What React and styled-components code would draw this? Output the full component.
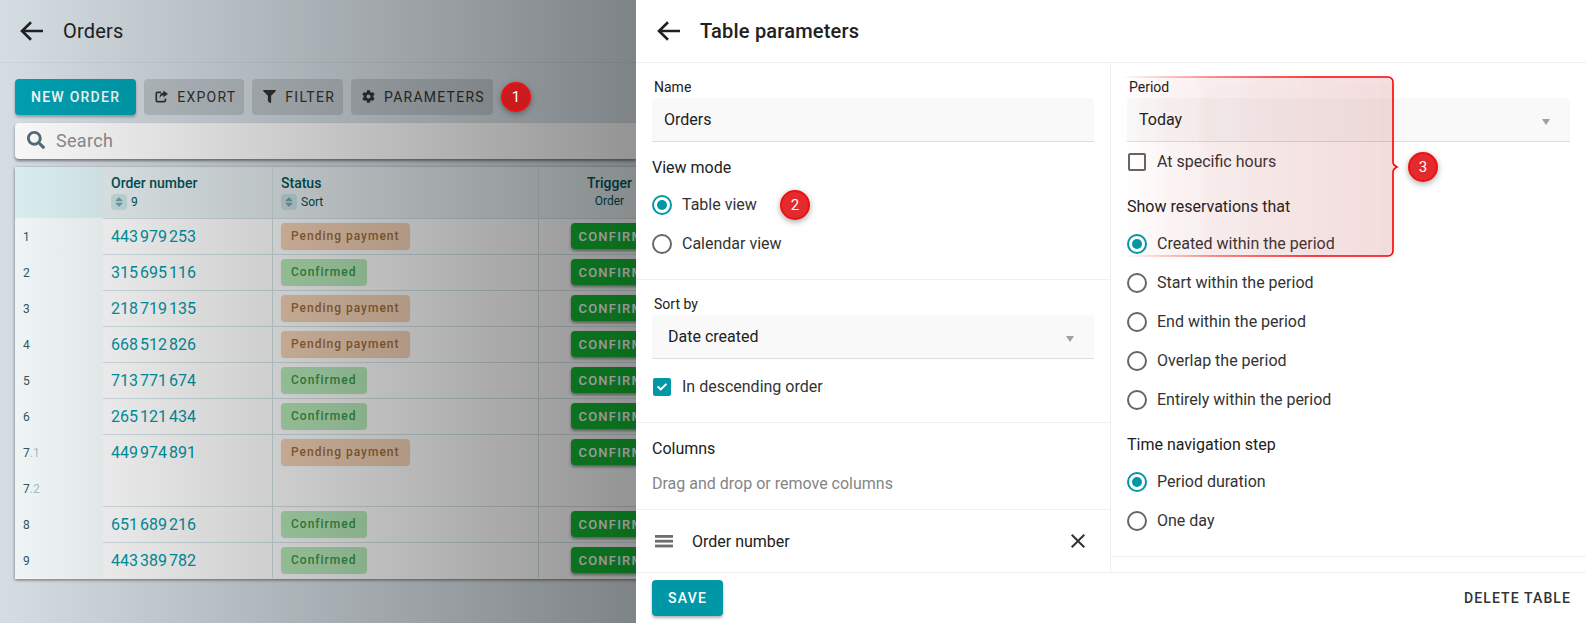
import React from 'react';
import styled, { createGlobalStyle } from 'styled-components';
import { FaCheck, FaCog, FaFilter, FaSearch, FaSort } from 'react-icons/fa';
import { MdClose } from 'react-icons/md';

const GlobalStyle = createGlobalStyle`
  html, body {
    margin: 0;
    height: 100%;
    overflow: hidden;
  }
  body {
    font-family: Roboto, "Liberation Sans", sans-serif;
    color: #212121;
  }
  * {
    box-sizing: border-box;
  }
`;

const Page = styled.div`
  display: flex;
  width: 1586px;
  height: 623px;
  overflow: hidden;
`;

/* Left side: the orders page, dimmed */
const OrdersPane = styled.div`
  position: relative;
  width: 636px;
  flex: none;
  overflow: hidden;
  background: #d9e2e8;
`;

const Dimmer = styled.div`
  position: absolute;
  inset: 0;
  z-index: 1;
  pointer-events: none;
  background: linear-gradient(to right, rgba(0, 0, 0, 0.02), rgba(0, 0, 0, 0.42));
`;

const TopBar = styled.header`
  display: flex;
  align-items: center;
  height: 63px;
  border-bottom: 1px solid ${(p) => p.$line};
  padding-left: ${(p) => p.$left}px;
  flex: none;
`;

const BackIcon = styled.svg`
  width: 24px;
  height: 20px;
  flex: none;
  margin-right: 19px;
`;

const PageTitle = styled.h1`
  margin: 0;
  font-size: 20px;
  font-weight: ${(p) => p.$weight};
  letter-spacing: 0.2px;
  color: #212121;
`;

const Toolbar = styled.div`
  display: flex;
  align-items: center;
  gap: 8px;
  margin: 16px 0 8px 15px;
`;

const PrimaryButton = styled.button`
  height: 36px;
  padding: 0 16px;
  border: 0;
  border-radius: 4px;
  background: ${(p) => p.$bg};
  color: #fff;
  font: 500 14px Roboto, sans-serif;
  letter-spacing: 1.25px;
  box-shadow: 0 2px 3px rgba(0, 0, 0, 0.3);
`;

const GreyButton = styled.button`
  display: flex;
  align-items: center;
  gap: 9px;
  height: 36px;
  padding: 0 8px 1px 11px;
  border: 0;
  border-radius: 4px;
  background: rgba(0, 0, 0, 0.12);
  color: #333;
  font: 400 14px Roboto, sans-serif;
  letter-spacing: 1.25px;

  svg {
    width: 13px;
    height: 13px;
  }
`;

const Badge = styled.span`
  position: relative;
  z-index: 2;
  display: inline-flex;
  align-items: center;
  justify-content: center;
  width: 30px;
  height: 30px;
  flex: none;
  margin-left: ${(p) => p.$gap ?? 0}px;
  border: 2px solid #ee1111;
  border-radius: 50%;
  background: ${(p) => (p.$dim ? '#c91a1e' : '#e32a2e')};
  color: #fff;
  font-size: 15px;
  box-shadow: 0 2px 6px rgba(0, 0, 0, 0.35);
`;

const SearchBox = styled.div`
  display: flex;
  align-items: center;
  gap: 11px;
  height: 36px;
  margin-left: 15px;
  padding: 0 0 2px 12px;
  background: #fff;
  border-radius: 4px 0 0 4px;
  box-shadow: 0 2px 3px rgba(0, 0, 0, 0.45);
  color: #546e7a;
  font-size: 18px;

  span {
    color: #8f8f8f;
    letter-spacing: 0.3px;
  }
`;

const Table = styled.div`
  display: grid;
  grid-template-columns: 88px 170px 266px 142px;
  width: 666px;
  margin: 8px 0 0 15px;
  padding-bottom: 1px;
  background: #fff;
  box-shadow: 0 1px 3px rgba(0, 0, 0, 0.5);
`;

const HeadCell = styled.div`
  height: 51px;
  padding: 8px 8px 0;
  background: ${(p) => (p.$first ? '#dff3f5' : '#e9f1f2')};
  border-right: ${(p) => (p.$first ? '0' : '1px solid #d6e4e6')};
  text-align: ${(p) => (p.$center ? 'center' : 'left')};
  color: #00545c;
  font-size: 14px;
  font-weight: 500;
`;

const SortLine = styled.div`
  display: flex;
  align-items: center;
  justify-content: ${(p) => (p.$center ? 'center' : 'flex-start')};
  gap: 4px;
  margin-top: 3px;
  font-size: 12px;
  font-weight: 400;
`;

const SortChip = styled.span`
  display: flex;
  align-items: center;
  justify-content: center;
  width: 16px;
  height: 16px;
  border-radius: 4px;
  background: rgba(0, 131, 143, 0.14);
  color: #6fa5ac;
  font-size: 12px;
`;

const IndexCell = styled.div`
  height: ${(p) => p.$height}px;
  padding: 1px 0 0 8px;
  background: #f6fcfd;
  font-size: 12px;
  color: #37575c;
`;

const IndexLine = styled.div`
  display: flex;
  align-items: center;
  height: 36px;

  i {
    font-style: normal;
    color: #a9c4c9;
  }
`;

const Cell = styled.div`
  height: ${(p) => p.$height}px;
  padding: 4px 8px 0;
  border-top: 1px solid #d3e3e5;
  border-right: 1px solid #d3e3e5;
  text-align: ${(p) => (p.$center ? 'center' : 'left')};
`;

const OrderNumber = styled.a`
  display: block;
  margin-top: 3px;
  color: #0097a7;
  font-size: 16px;
  font-weight: 400;
  line-height: 22px;
`;

const Gap = styled.span`
  display: inline-block;
  width: 2px;
`;

const StatusChip = styled.span`
  display: inline-block;
  height: 26px;
  padding: 0 10px;
  border-radius: 4px;
  background: ${(p) => (p.$kind === 'pending' ? '#f3d2b6' : '#b6e9b8')};
  color: ${(p) => (p.$kind === 'pending' ? '#9c6c3e' : '#36974a')};
  font-size: 12px;
  font-weight: 500;
  letter-spacing: 1px;
  line-height: 27px;
  box-shadow: 0 1px 1px rgba(0, 0, 0, 0.18);
`;

const ConfirmButton = styled.span`
  display: inline-block;
  width: 78px;
  height: 26px;
  padding-left: 8px;
  border-radius: 4px;
  background: #14b832;
  color: #fff;
  font-size: 13px;
  font-weight: 500;
  letter-spacing: 1.2px;
  line-height: 28px;
  text-align: left;
  white-space: nowrap;
  overflow: hidden;
  box-shadow: 0 2px 3px rgba(0, 0, 0, 0.4);
`;

/* Right side: the parameters drawer */
const Drawer = styled.div`
  position: relative;
  display: flex;
  flex-direction: column;
  flex: 1;
  background: #fff;
`;

const DrawerBody = styled.div`
  display: grid;
  grid-template-columns: 474px 476px;
  flex: 1;
  min-height: 0;
`;

const Column = styled.div`
  border-left: ${(p) => (p.$divided ? '1px solid #f0f0f0' : '0')};
  overflow: hidden;
`;

const Section = styled.section`
  padding: ${(p) => p.$top ?? 16}px 16px ${(p) => p.$bottom ?? 16}px;
  border-bottom: 1px solid #f0f0f0;
`;

const FieldLabel = styled.label`
  display: block;
  height: 16px;
  margin: 0 0 3px 2px;
  font-size: 14px;
  line-height: 16px;
`;

const Field = styled.div`
  display: flex;
  align-items: center;
  justify-content: space-between;
  height: 44px;
  margin-bottom: ${(p) => p.$after ?? 0}px;
  padding: 0 ${(p) => (p.$select ? 20 : 12)}px 0 ${(p) => p.$inset ?? 12}px;
  border-bottom: 1px solid #dedede;
  border-radius: 4px 4px 0 0;
  background: #f9f9f9;
  font-size: 16px;
`;

const Caret = styled.span`
  width: 0;
  height: 0;
  margin-top: 4px;
  border-left: 4px solid transparent;
  border-right: 4px solid transparent;
  border-top: 6px solid #a0a0a0;
`;

const Heading = styled.div`
  height: 20px;
  margin-top: ${(p) => p.$top}px;
  margin-bottom: ${(p) => p.$bottom}px;
  font-size: 16px;
  line-height: 20px;
  color: ${(p) => (p.$muted ? '#858585' : '#212121')};
`;

const OptionRow = styled.div`
  display: flex;
  align-items: center;
  height: 39px;
  font-size: 16px;
  color: #333;
`;

const RadioMark = styled.span`
  position: relative;
  width: 20px;
  height: 20px;
  flex: none;
  margin-right: 10px;
  border: 2px solid ${(p) => (p.$on ? '#0097a7' : '#666')};
  border-radius: 50%;

  &::after {
    content: '';
    display: ${(p) => (p.$on ? 'block' : 'none')};
    position: absolute;
    inset: 3px;
    border-radius: 50%;
    background: #0097a7;
  }
`;

const CheckMark = styled.span`
  display: flex;
  align-items: center;
  justify-content: center;
  width: 18px;
  height: 18px;
  flex: none;
  margin: 0 11px 0 1px;
  border: 2px solid ${(p) => (p.$on ? '#0097a7' : '#666')};
  border-radius: 2px;
  background: ${(p) => (p.$on ? '#0097a7' : 'transparent')};
  color: #fff;
  font-size: 10px;
`;

const ColumnRow = styled.div`
  display: flex;
  align-items: center;
  height: 62px;
  padding: 0 20px 0 16px;
  font-size: 16px;
  color: #212121;

  span {
    flex: 1;
    margin-left: 16px;
  }
`;

const Footer = styled.footer`
  display: flex;
  align-items: flex-start;
  justify-content: space-between;
  height: 51px;
  flex: none;
  padding: 7px 15px 0 16px;
  border-top: 1px solid #f0f0f0;
`;

const TextButton = styled.button`
  height: 36px;
  padding: 0;
  border: 0;
  background: none;
  color: #333;
  font: 500 14px Roboto, sans-serif;
  letter-spacing: 1.1px;
`;

const Callout = styled.svg`
  position: absolute;
  left: 480px;
  top: 69px;
  width: 300px;
  height: 200px;
  pointer-events: none;
`;

const CalloutBadge = styled(Badge)`
  position: absolute;
  left: 772px;
  top: 152px;
`;

const orders = [
  { n: '1', id: ['443', '979', '253'], status: 'pending' },
  { n: '2', id: ['315', '695', '116'], status: 'ok' },
  { n: '3', id: ['218', '719', '135'], status: 'pending' },
  { n: '4', id: ['668', '512', '826'], status: 'pending' },
  { n: '5', id: ['713', '771', '674'], status: 'ok' },
  { n: '6', id: ['265', '121', '434'], status: 'ok' },
  { n: '7', id: ['449', '974', '891'], status: 'pending', split: true },
  { n: '8', id: ['651', '689', '216'], status: 'ok' },
  { n: '9', id: ['443', '389', '782'], status: 'ok' },
];

const BackArrow = () => (
  <BackIcon viewBox="0 0 24 20">
    <path d="M23 10H2M11 1.2L2 10l9 8.8" fill="none" stroke="#212121" strokeWidth="2.6" />
  </BackIcon>
);

const ExportIcon = () => (
  <svg viewBox="0 0 14 14">
    <path
      d="M6.5 2.6H2.4a1 1 0 0 0-1 1v8a1 1 0 0 0 1 1h7.8a1 1 0 0 0 1-1V9.2"
      fill="none"
      stroke="#333"
      strokeWidth="1.8"
    />
    <path d="M9 .6l5 3.6-5 3.6V5.6C7.2 5.6 5.8 6.6 5.2 9.2 4.6 5.6 6.2 3 9 2.8z" fill="#333" />
  </svg>
);

const DragIcon = () => (
  <svg width="24" height="24" viewBox="0 0 24 24" fill="#6e6e6e">
    <rect x="3" y="6" width="18" height="2.8" />
    <rect x="3" y="10.8" width="18" height="2.8" />
    <rect x="3" y="15.6" width="18" height="2.8" />
  </svg>
);

const Radio = ({ on, children }) => (
  <OptionRow>
    <RadioMark $on={on} />
    {children}
  </OptionRow>
);

const Check = ({ on, children }) => (
  <OptionRow>
    <CheckMark $on={on}>{on && <FaCheck />}</CheckMark>
    {children}
  </OptionRow>
);

const OrderRow = ({ order }) => {
  const height = order.split ? 72 : 36;
  return (
    <>
      <IndexCell $height={height}>
        {order.split ? (
          <>
            <IndexLine>7<i>.1</i></IndexLine>
            <IndexLine>7<i>.2</i></IndexLine>
          </>
        ) : (
          <IndexLine>{order.n}</IndexLine>
        )}
      </IndexCell>
      <Cell $height={height}>
        <OrderNumber>
          {order.id[0]}<Gap />{order.id[1]}<Gap />{order.id[2]}
        </OrderNumber>
      </Cell>
      <Cell $height={height}>
        <StatusChip $kind={order.status}>
          {order.status === 'pending' ? 'Pending payment' : 'Confirmed'}
        </StatusChip>
      </Cell>
      <Cell $height={height} $center>
        <ConfirmButton>CONFIRM</ConfirmButton>
      </Cell>
    </>
  );
};

export default function App() {
  return (
    <Page>
      <GlobalStyle />
      <OrdersPane>
        <Dimmer />
        <TopBar $left={20} $line="#cfd8dc">
          <BackArrow />
          <PageTitle as="div" $weight={400}>Orders</PageTitle>
        </TopBar>
        <Toolbar>
          <PrimaryButton $bg="#00a3b4">NEW ORDER</PrimaryButton>
          <GreyButton><ExportIcon />EXPORT</GreyButton>
          <GreyButton><FaFilter />FILTER</GreyButton>
          <GreyButton><FaCog />PARAMETERS</GreyButton>
          <Badge $dim>1</Badge>
        </Toolbar>
        <SearchBox>
          <FaSearch />
          <span>Search</span>
        </SearchBox>
        <Table>
          <HeadCell $first />
          <HeadCell>
            Order number
            <SortLine><SortChip><FaSort /></SortChip>9</SortLine>
          </HeadCell>
          <HeadCell>
            Status
            <SortLine><SortChip><FaSort /></SortChip>Sort</SortLine>
          </HeadCell>
          <HeadCell $center>
            Trigger
            <SortLine $center>Order</SortLine>
          </HeadCell>
          {orders.map((order) => (
            <OrderRow key={order.n} order={order} />
          ))}
        </Table>
      </OrdersPane>

      <Drawer>
        <TopBar $left={21} $line="#f0f0f0">
          <BackArrow />
          <PageTitle $weight={500}>Table parameters</PageTitle>
        </TopBar>
        <DrawerBody>
          <Column>
            <Section>
              <FieldLabel>Name</FieldLabel>
              <Field>Orders</Field>
              <Heading $top={16} $bottom={7}>View mode</Heading>
              <OptionRow>
                <RadioMark $on />
                Table view
                <Badge $gap={23}>2</Badge>
              </OptionRow>
              <Radio>Calendar view</Radio>
            </Section>
            <Section>
              <FieldLabel>Sort by</FieldLabel>
              <Field $select $inset={16} $after={8}>Date created<Caret /></Field>
              <Check on>In descending order</Check>
            </Section>
            <Section $bottom={15}>
              <Heading $top={0} $bottom={15}>Columns</Heading>
              <Heading $top={0} $bottom={0} $muted>Drag and drop or remove columns</Heading>
            </Section>
            <ColumnRow>
              <DragIcon />
              <span>Order number</span>
              <MdClose size={24} color="#333" />
            </ColumnRow>
          </Column>
          <Column $divided>
            <Section>
              <FieldLabel>Period</FieldLabel>
              <Field $select>Today<Caret /></Field>
              <Check>At specific hours</Check>
              <Heading $top={16} $bottom={7}>Show reservations that</Heading>
              <Radio on>Created within the period</Radio>
              <Radio>Start within the period</Radio>
              <Radio>End within the period</Radio>
              <Radio>Overlap the period</Radio>
              <Radio>Entirely within the period</Radio>
              <Heading $top={16} $bottom={7}>Time navigation step</Heading>
              <Radio on>Period duration</Radio>
              <Radio>One day</Radio>
            </Section>
          </Column>
        </DrawerBody>
        <Footer>
          <PrimaryButton $bg="#0097a7">SAVE</PrimaryButton>
          <TextButton>DELETE TABLE</TextButton>
        </Footer>
        <Callout viewBox="0 0 300 200">
          <defs>
            <linearGradient id="calloutLine" x1="0" x2="1" y1="0" y2="0">
              <stop offset="0" stopColor="#ff0000" stopOpacity="0" />
              <stop offset="0.35" stopColor="#ff0000" stopOpacity="0.6" />
              <stop offset="0.7" stopColor="#ff0000" />
            </linearGradient>
            <linearGradient id="calloutFill" x1="0" x2="1" y1="0" y2="0">
              <stop offset="0" stopColor="#c03030" stopOpacity="0" />
              <stop offset="0.5" stopColor="#c03030" stopOpacity="0.1" />
              <stop offset="1" stopColor="#c03030" stopOpacity="0.14" />
            </linearGradient>
            <filter id="calloutShadow" x="-10%" y="-10%" width="125%" height="125%">
              <feDropShadow dx="2" dy="3" stdDeviation="4" floodColor="#000" floodOpacity="0.22" />
            </filter>
          </defs>
          <path
            d="M5 8H272a5 5 0 0 1 5 5V93q0 3 4 5q-4 2-4 5V182a5 5 0 0 1-5 5H5z"
            fill="url(#calloutFill)"
            filter="url(#calloutShadow)"
          />
          <path
            d="M5 8H272a5 5 0 0 1 5 5V93q0 3 4 5q-4 2-4 5V182a5 5 0 0 1-5 5H5"
            fill="none"
            stroke="url(#calloutLine)"
            strokeWidth="1.6"
          />
        </Callout>
        <CalloutBadge>3</CalloutBadge>
      </Drawer>
    </Page>
  );
}
